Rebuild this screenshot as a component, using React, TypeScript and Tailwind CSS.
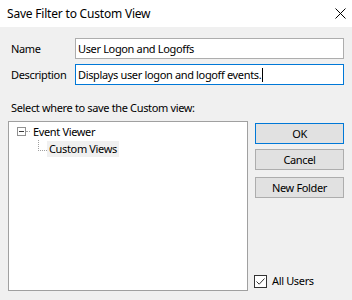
import React from "react";

export default function App() {
  return (
    <div className="w-[352px] h-[300px] bg-[#f0f0f0] flex flex-col font-['Noto_Sans',sans-serif] text-[11px] tracking-[-0.35px] text-black overflow-hidden">
      {/* Title bar */}
      <div className="h-[27px] bg-white flex items-center justify-between pl-[7px] pr-[6px] shrink-0">
        <span className="text-[12px] tracking-[-0.2px] leading-[16px]">Save Filter to Custom View</span>
        <svg width="11" height="11" viewBox="0 0 11 11">
          <path d="M0.5 0.5 L10.5 10.5 M10.5 0.5 L0.5 10.5" stroke="#000" strokeWidth="1" />
        </svg>
      </div>

      {/* Body */}
      <div className="flex flex-col flex-1 px-[8px] pt-[11px]">
        <div className="flex items-center h-[21px]">
          <span className="w-[67px] pl-[3px] leading-[16px]">Name</span>
          <div className="flex-1 h-[21px] bg-white border border-[#adadad] flex items-center px-[2px] leading-[16px]">
            User Logon and Logoffs
          </div>
        </div>
        <div className="flex items-center h-[21px] mt-[5px]">
          <span className="w-[67px] pl-[3px] leading-[16px]">Description</span>
          <div className="flex-1 h-[21px] bg-white border border-[#0078d7] flex items-center px-[2px] leading-[16px]">
            <span>Displays user logon and logoff events.</span>
            <span className="w-px h-[14px] bg-black ml-[1px]" />
          </div>
        </div>

        <div className="mt-[15px] pl-[3px] leading-[16px]">Select where to save the Custom view:</div>

        <div className="flex mt-[5px]">
          {/* Tree */}
          <div className="w-[240px] h-[170px] bg-white border border-[#a0a0a0] pt-[1px] pl-[8px]">
            <div className="flex items-center h-[17px]">
              <div className="w-[9px] h-[9px] border border-[#919191] flex items-center justify-center bg-white">
                <div className="w-[5px] h-px bg-[#3a3a3a]" />
              </div>
              <div className="w-[4px] border-t border-dotted border-[#a0a0a0]" />
              <span className="ml-[3px] leading-[16px]">Event Viewer</span>
            </div>
            <div className="flex h-[17px]">
              <div className="ml-[21px] w-[9px] h-[11px] border-l border-b border-dotted border-[#a0a0a0]" />
              <span className="mt-[1px] px-[2px] bg-[#f0f0f0] leading-[16px] h-[16px]">Custom Views</span>
            </div>
          </div>

          {/* Buttons */}
          <div className="flex flex-col ml-[7px] flex-1 pt-[2px]">
            <button className="h-[21px] bg-[#e1e1e1] border border-[#0078d7] flex items-center justify-center leading-[16px]">
              OK
            </button>
            <button className="h-[21px] mt-[5px] bg-[#e1e1e1] border border-[#adadad] flex items-center justify-center leading-[16px]">
              Cancel
            </button>
            <button className="h-[21px] mt-[7px] bg-[#e1e1e1] border border-[#adadad] flex items-center justify-center leading-[16px]">
              New Folder
            </button>
            <div className="flex-1" />
            <div className="flex items-center mb-[2px] -ml-[1px]">
              <div className="w-[13px] h-[13px] border border-[#333] bg-white flex items-center justify-center">
                <svg width="11" height="11" viewBox="0 0 11 11">
                  <path d="M1.5 5.5 L4.2 8.2 L9.5 2.5" stroke="#333" strokeWidth="1" fill="none" />
                </svg>
              </div>
              <span className="ml-[5px] leading-[16px]">All Users</span>
            </div>
          </div>
        </div>
      </div>
    </div>
  );
}
